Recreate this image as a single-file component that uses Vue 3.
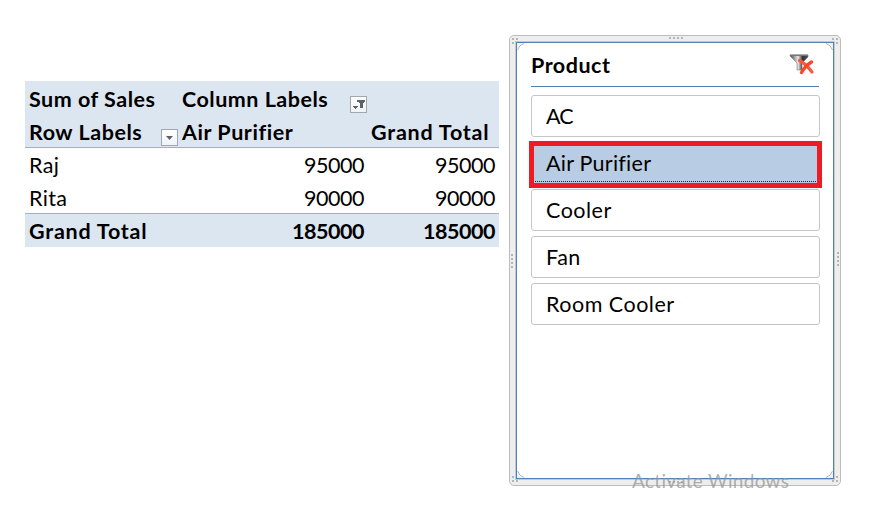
<script setup>
import { ref } from 'vue'

const rows = [
  { name: 'Raj', purifier: 95000, total: 95000 },
  { name: 'Rita', purifier: 90000, total: 90000 },
]
const products = ['AC', 'Air Purifier', 'Cooler', 'Fan', 'Room Cooler']
const selected = ref('Air Purifier')
</script>

<template>
  <main class="sheet">
    <section class="pivot">
      <div class="row head">
        <div class="cell"><span class="t-sum">Sum of Sales</span></div>
        <div class="cell column-label">
          <span class="t-column">Column Labels</span>
          <button class="drop" aria-label="Filter columns">
            <svg width="15" height="15" viewBox="0 0 15 15" shape-rendering="crispEdges">
              <path d="M6 3h8v2h-1v1h-1v5H9V6H8V5H6zM2 9h5v1H6v1H5v1H4v-1H3v-1H2z" fill="#5d6268" />
            </svg>
          </button>
        </div>
        <div class="cell"></div>
      </div>
      <div class="row head last">
        <div class="cell row-label">
          <span class="t-row">Row Labels</span>
          <button class="drop" aria-label="Filter rows">
            <svg width="15" height="15" viewBox="0 0 15 15">
              <path d="M4 6h7L7.5 10z" fill="#5d6268" />
            </svg>
          </button>
        </div>
        <div class="cell"><span class="t-air">Air Purifier</span></div>
        <div class="cell"><span class="t-grand">Grand Total</span></div>
      </div>
      <div v-for="r in rows" :key="r.name" class="row">
        <div class="cell name">{{ r.name }}</div>
        <div class="cell num">{{ r.purifier }}</div>
        <div class="cell num">{{ r.total }}</div>
      </div>
      <div class="row foot">
        <div class="cell"><span class="t-grand">Grand Total</span></div>
        <div class="cell num">185000</div>
        <div class="cell num">185000</div>
      </div>
    </section>

    <aside class="frame">
      <svg class="grips" width="332" height="451" viewBox="0 0 332 451" fill="#b5b5b5">
        <path d="M160 2h2v2h-2zM164 2h2v2h-2zM168 2h2v2h-2zM172 2h2v2h-2z" />
        <path d="M160 446h2v2h-2zM164 446h2v2h-2zM168 446h2v2h-2zM172 446h2v2h-2z" />
        <path d="M2 219h2v2h-2zM2 223h2v2h-2zM2 227h2v2h-2zM2 231h2v2h-2z" />
        <path d="M328 217h2v2h-2zM328 221h2v2h-2zM328 225h2v2h-2zM328 229h2v2h-2z" />
        <path d="M3 3h2v2H3zM7 3h2v2H7zM3 7h2v2H3zM323 3h2v2h-2zM327 3h2v2h-2zM327 7h2v2h-2z" />
        <path d="M3 441h2v2H3zM3 445h2v2H3zM7 445h2v2H7zM327 441h2v2h-2zM327 445h2v2h-2zM323 445h2v2h-2z" />
      </svg>
      <div class="slicer">
        <header class="title">
          <span class="t-product">Product</span>
          <svg class="clear" width="26" height="24" viewBox="0 0 26 24">
            <defs>
              <linearGradient id="funnel" x1="0" x2="1">
                <stop offset="0" stop-color="#444" />
                <stop offset=".45" stop-color="#e8e8e8" />
                <stop offset=".7" stop-color="#333" />
                <stop offset="1" stop-color="#555" />
              </linearGradient>
            </defs>
            <path d="M1 2h18v2l-6 6v7H8v-7L1 3z" fill="url(#funnel)" stroke="#777" stroke-width=".6" />
            <path d="M1 2.3h18" stroke="#777" stroke-width="1.4" />
            <path d="M10.5 7.5Q17 11 23 19" stroke="#f9593c" stroke-width="3.2" stroke-linecap="round" fill="none" />
            <path d="M22.5 9Q16 13 12.5 19.5" stroke="#f9472c" stroke-width="3.4" stroke-linecap="round" fill="none" />
          </svg>
        </header>
        <div class="items">
          <button
            v-for="p in products"
            :key="p"
            class="item"
            :class="{ active: p === selected, tight: p === 'AC' }"
            @click="selected = p"
          >
            <span>{{ p }}</span>
          </button>
        </div>
      </div>
      <svg class="corners" width="318" height="437" viewBox="0 0 318 437">
        <path d="M1 1h7Q2 2 1 8zM317 1h-7q6 1 7 7zM1 436h7q-6-1-7-7zM317 436h-7q6-1 7-7z" fill="#f0f0f0" />
        <path d="M8 1.5Q3 3 1.5 8M310 1.5q5 1.5 6.5 6.5M1.5 429Q3 434 8 435.5M316.5 429q-1.5 5-6.5 6.5" fill="none" stroke="#b4b4b4" />
      </svg>
      <span class="watermark">Activate Windows</span>
    </aside>
  </main>
</template>

<style>
body {
  background: #fff;
  overflow: hidden;
}
</style>

<style scoped>
.sheet {
  box-sizing: border-box;
  width: 870px;
  height: 508px;
  padding: 35px 0 0 25px;
  display: flex;
  align-items: flex-start;
  gap: 10px;
  font-family: Lato, sans-serif;
  font-size: 21.5px;
  color: #000;
}
.pivot {
  width: 474px;
  margin-top: 46px;
}
.row {
  box-sizing: border-box;
  display: grid;
  grid-template-columns: 153px 190px 131px;
  height: 33px;
}
.cell {
  padding: 2px 4px 0;
  line-height: 32px;
  white-space: nowrap;
}
.cell:nth-child(3):not(.num) {
  padding-left: 3px;
}
.head,
.foot {
  background: #dce6f0;
  font-weight: 700;
}
.head.last {
  height: 34px;
  margin-bottom: -1px;
  border-bottom: 1px solid #95b3d7;
}
.foot {
  height: 34px;
  border-top: 1px solid #95b3d7;
}
.foot .cell {
  padding-top: 1px;
}
.t-sum,
.t-column {
  letter-spacing: 0.5px;
}
.t-row {
  letter-spacing: 0.55px;
}
.t-air {
  letter-spacing: 0.55px;
}
.t-grand {
  letter-spacing: 0.78px;
}
.t-product {
  letter-spacing: 0.5px;
}
.name {
  letter-spacing: 0.35px;
}
.num {
  text-align: right;
  letter-spacing: -0.47px;
}
.column-label,
.row-label {
  display: flex;
}
.drop {
  box-sizing: border-box;
  width: 17px;
  height: 17px;
  padding: 0;
  border: 1px solid #a3a8b0;
  background: linear-gradient(#fff, #f0f2f5);
  display: flex;
  flex: none;
}
.column-label .drop {
  margin: 13px -3px 0 auto;
}
.row-label .drop {
  margin: 13px -4px 0 auto;
}
.frame {
  position: relative;
  box-sizing: border-box;
  width: 332px;
  height: 451px;
  padding: 6px;
  border: 1px solid #bcbcbc;
  border-radius: 5px;
  background: #eee;
}
.grips {
  position: absolute;
  left: -1px;
  top: -1px;
}
.corners {
  position: absolute;
  left: 6px;
  top: 6px;
  pointer-events: none;
}
.slicer {
  position: relative;
  box-sizing: border-box;
  width: 318px;
  height: 437px;
  padding: 0 13px 0 14px;
  border: 1px solid #4f81bd;
  background: #fff;
  box-shadow: 0 0 0 1px #c9c9c9;
}
.title {
  box-sizing: border-box;
  width: 288px;
  height: 44px;
  border-bottom: 1px solid #4f81bd;
  display: flex;
  justify-content: space-between;
  font-weight: 700;
  line-height: 45px;
}
.clear {
  margin: 10px 4px 0 0;
}
.items {
  display: flex;
  flex-direction: column;
  gap: 5px;
  margin-top: 8px;
}
.item {
  box-sizing: border-box;
  width: 289px;
  height: 42px;
  padding: 0 0 0 14px;
  border: 1px solid #c6c6c6;
  border-radius: 3px;
  background: #fff;
  font: inherit;
  color: #000;
  text-align: left;
  letter-spacing: 0.5px;
  line-height: 40px;
}
.item span {
  display: block;
  height: 40px;
}
.item.tight {
  letter-spacing: -0.8px;
}
.item.active {
  width: 293px;
  height: 47px;
  margin: -1px -2px -4px;
  padding-left: 12px;
  border: 5px solid #ed1c24;
  border-radius: 0;
  background: #b8cce4;
  letter-spacing: 0.25px;
  line-height: 34px;
  position: relative;
}
.item.active span {
  height: 37px;
}
.item.active::after {
  content: '';
  position: absolute;
  left: 1px;
  right: 1px;
  bottom: 1px;
  border-bottom: 1px dotted #222;
}
.watermark {
  position: absolute;
  left: 122px;
  top: 432px;
  font-size: 19px;
  letter-spacing: 0.3px;
  line-height: 26px;
  color: rgba(150, 150, 150, 0.75);
  white-space: nowrap;
}
</style>
